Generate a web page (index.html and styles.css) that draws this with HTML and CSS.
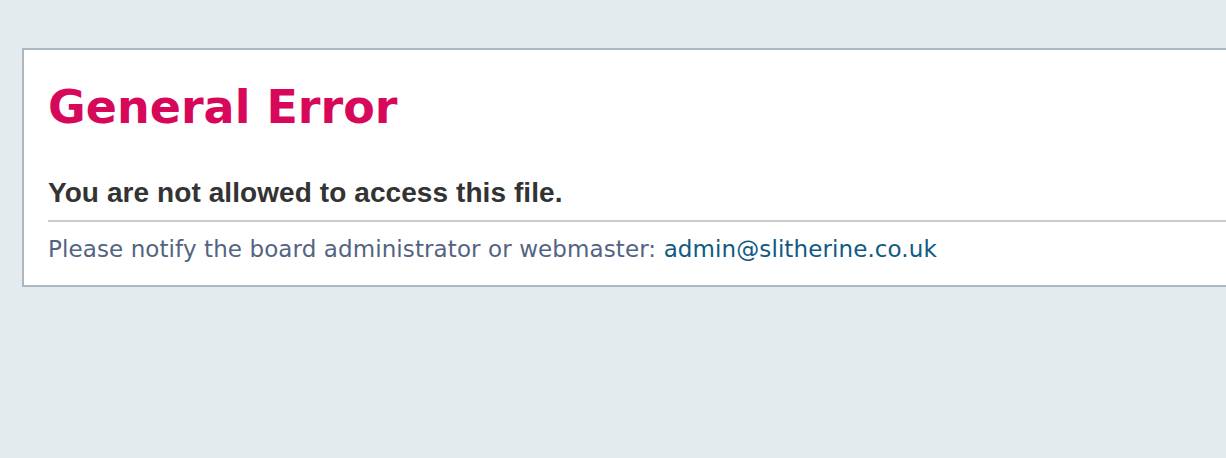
FILE: index.html
```html
<!DOCTYPE html>
<html>
<head>
<meta charset="utf-8">
<title>General Error</title>
<link rel="stylesheet" href="styles.css">
</head>
<body>
<div class="wrap">
  <div class="panel">
    <h1 class="title">General Error</h1>
    <h2 class="msg">You are not allowed to access this file.</h2>
    <p class="note">Please notify the board administrator or webmaster: <a class="mail" href="#">admin@slitherine.co.uk</a></p>
  </div>
</div>
</body>
</html>
```
FILE: styles.css
```css
html, body {
  margin: 0;
  padding: 0;
}
body {
  background: #e3ebef;
  font-family: "DejaVu Sans", Verdana, sans-serif;
  overflow: hidden;
  width: 1226px;
  height: 458px;
}
.wrap {
  padding: 48px 0 0 22px;
}
.panel {
  background: #fff;
  border: 2px solid #a9b8c2;
  border-right: none;
  width: 1204px;
  height: 239px;
  padding: 0 0 0 24px;
  box-sizing: border-box;
}
.title {
  margin: 0;
  padding-top: 29px;
  font-family: "DejaVu Sans", Verdana, sans-serif;
  font-weight: bold;
  font-size: 46px;
  line-height: 56px;
  color: #d7085a;
  white-space: nowrap;
}
.msg {
  margin: 0;
  padding-top: 42px;
  padding-bottom: 11px;
  font-family: "Liberation Sans", Arial, sans-serif;
  font-weight: bold;
  font-size: 28px;
  line-height: 32px;
  letter-spacing: 0.08px;
  color: #333;
  border-bottom: 2px solid #ccc;
  white-space: nowrap;
}
.note {
  margin: 0;
  padding-top: 12px;
  font-size: 23px;
  line-height: 30px;
  letter-spacing: 0.1px;
  color: #536482;
  white-space: nowrap;
}
.mail {
  color: #105a82;
  text-decoration: none;
}
```
